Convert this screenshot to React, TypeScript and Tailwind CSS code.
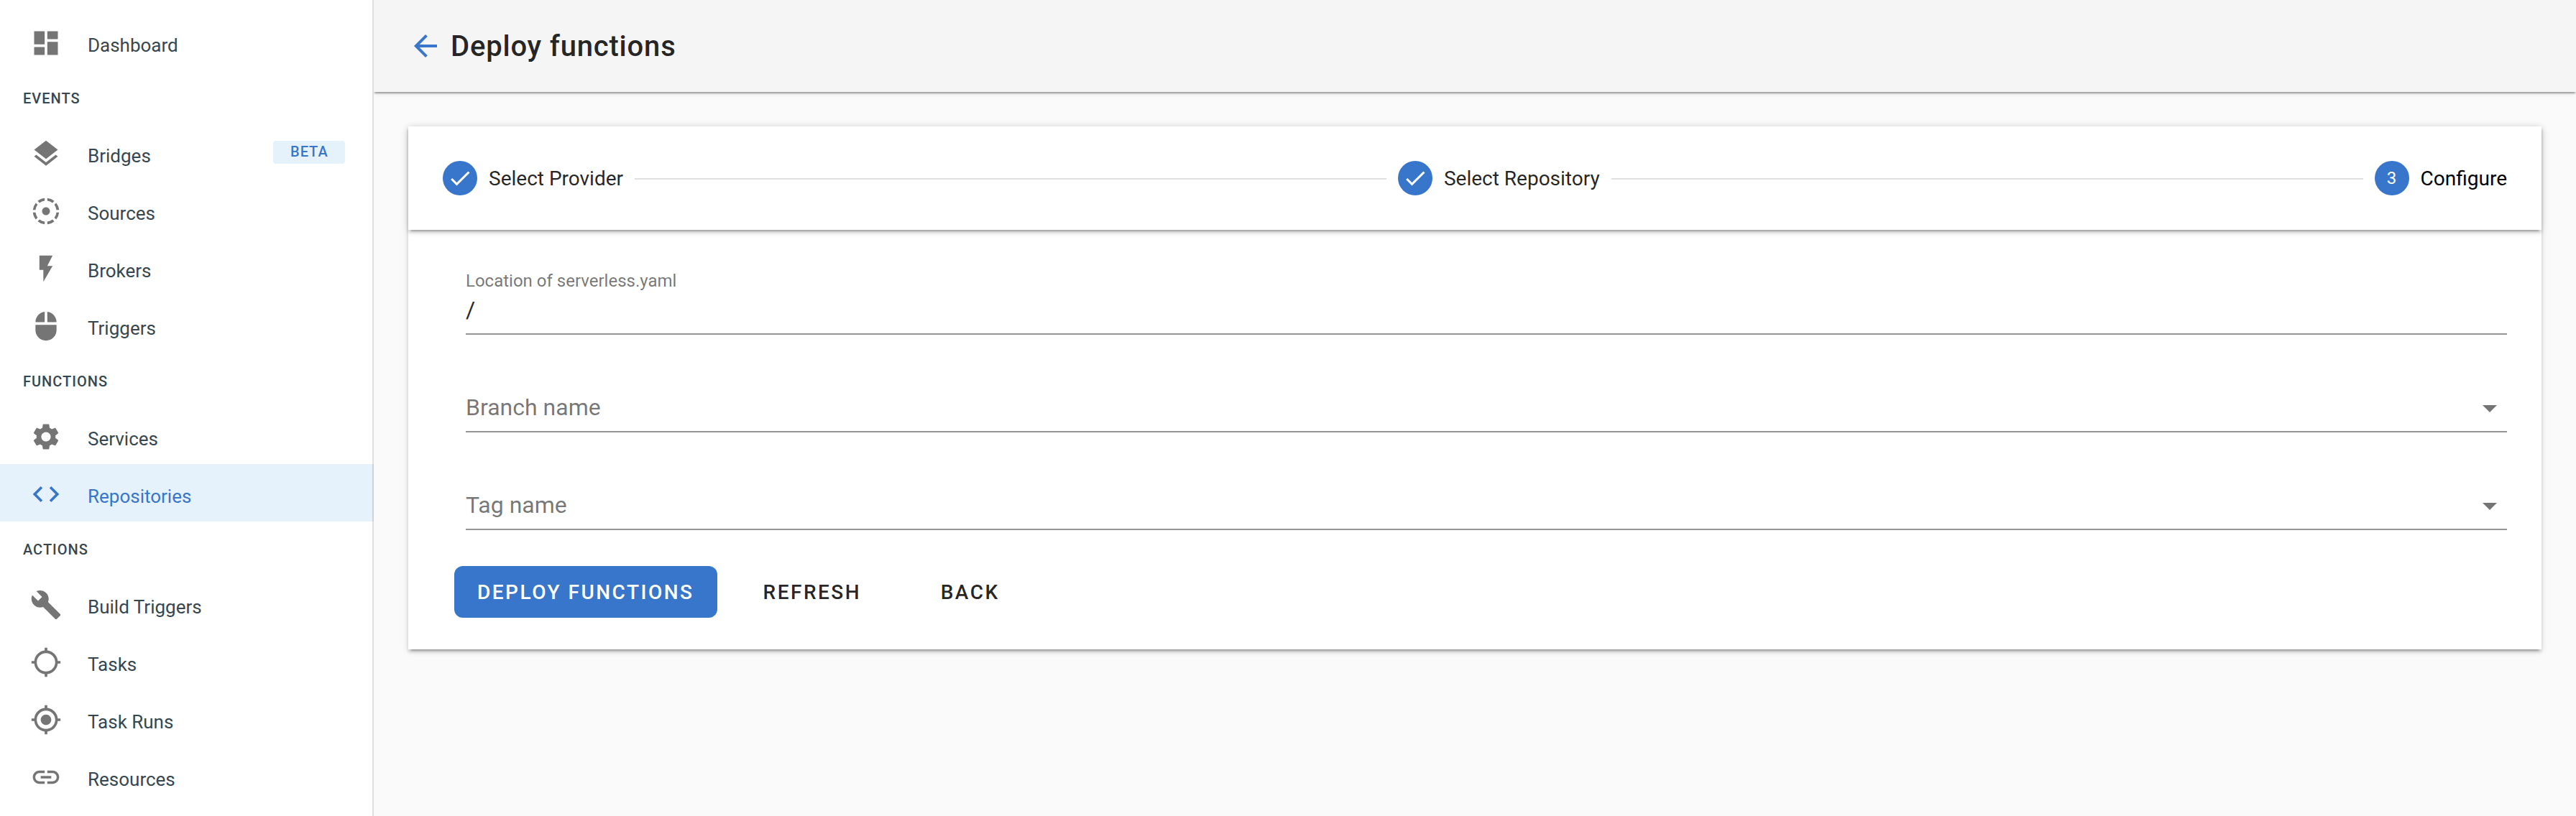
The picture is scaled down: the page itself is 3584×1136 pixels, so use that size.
import React from "react";
import type { IconType } from "react-icons";
import {
  MdArrowBack,
  MdArrowDropDown,
  MdBuild,
  MdCheck,
  MdCode,
  MdDashboard,
  MdFilterTiltShift,
  MdFlashOn,
  MdLayers,
  MdLink,
  MdLocationSearching,
  MdMouse,
  MdMyLocation,
  MdSettings,
} from "react-icons/md";

type Item = { label: string; icon: IconType; badge?: string; active?: boolean };
type Section = { title: string; items: Item[] };

const sections: Section[] = [
  {
    title: "EVENTS",
    items: [
      { label: "Bridges", icon: MdLayers, badge: "BETA" },
      { label: "Sources", icon: MdFilterTiltShift },
      { label: "Brokers", icon: MdFlashOn },
      { label: "Triggers", icon: MdMouse },
    ],
  },
  {
    title: "FUNCTIONS",
    items: [
      { label: "Services", icon: MdSettings },
      { label: "Repositories", icon: MdCode, active: true },
    ],
  },
  {
    title: "ACTIONS",
    items: [
      { label: "Build Triggers", icon: MdBuild },
      { label: "Tasks", icon: MdLocationSearching },
      { label: "Task Runs", icon: MdMyLocation },
      { label: "Resources", icon: MdLink },
    ],
  },
];

function NavItem({ label, icon: Icon, badge, active }: Item) {
  return (
    <a
      className={`flex h-20 items-center pl-[42px] pr-10 ${
        active ? "bg-[#e5f2fc] text-[#3776cb]" : "text-[#37474f]"
      }`}
    >
      <Icon className={`mt-1 size-11 shrink-0 ${active ? "text-[#3776cb]" : "text-[#757575]"}`} />
      <span className="ml-9 mt-2.5 text-[26px] leading-8">{label}</span>
      {badge && (
        <span className="ml-auto flex h-8 w-[100px] items-center rounded bg-[#e5f2fc] pb-0.5 pl-6 text-[20px] font-medium leading-7 tracking-[1px] text-[#3776cb]">
          {badge}
        </span>
      )}
    </a>
  );
}

function Sidebar() {
  return (
    <aside className="relative h-full w-[520px] shrink-0 bg-white pt-[18px] after:absolute after:inset-y-0 after:right-0 after:w-0.5 after:bg-black/12">
      <NavItem label="Dashboard" icon={MdDashboard} />
      {sections.map((s) => (
        <section key={s.title}>
          <h2 className="flex h-[74px] items-center pl-8 pt-1 text-[20px] font-medium leading-6 tracking-[1px] text-[#37474f]">
            {s.title}
          </h2>
          {s.items.map((i) => (
            <NavItem key={i.label} {...i} />
          ))}
        </section>
      ))}
    </aside>
  );
}

function Step({ label, number }: { label: string; number?: number }) {
  return (
    <div className="flex items-center gap-4">
      <span className="flex size-12 items-center justify-center rounded-full bg-[#3776cb] text-[24px] leading-6 text-white">
        {number ?? <MdCheck className="size-9" />}
      </span>
      <span className={`pt-0.5 text-[28px] leading-8 ${number ? "text-black" : "text-black/87"}`}>{label}</span>
    </div>
  );
}

function SelectField({ label }: { label: string }) {
  return (
    <div className="flex h-[136px] items-end">
      <div className="flex h-[70px] w-full items-start justify-between border-b-2 border-[#949494]">
        <span className="pt-[15px] text-[32px] leading-10 text-black/55">{label}</span>
        <MdArrowDropDown className="mt-3 size-12 text-[#757575]" />
      </div>
    </div>
  );
}

const raised =
  "shadow-[0_6px_2px_-4px_rgba(0,0,0,0.2),0_4px_4px_0_rgba(0,0,0,0.14),0_2px_10px_0_rgba(0,0,0,0.12)]";

export default function App() {
  return (
    <div className="flex h-[1136px] w-[3584px] overflow-hidden bg-[#fafafa] font-[Roboto,sans-serif] text-black/87">
      <Sidebar />
      <main className="min-w-0 flex-1 overflow-hidden">
        <header className="flex h-32 items-center gap-[11px] bg-[#f5f5f5] pl-12 shadow-[0_4px_2px_-2px_rgba(0,0,0,0.2),0_2px_2px_0_rgba(0,0,0,0.14),0_2px_6px_0_rgba(0,0,0,0.12)]">
          <MdArrowBack className="size-12 text-[#3776cb]" />
          <h1 className="pt-0.5 text-[40px] font-medium leading-[48px] tracking-[0.8px]">Deploy functions</h1>
        </header>

        <div className={`mx-12 mt-12 h-[728px] bg-white ${raised}`}>
          <div className={`flex h-36 items-center gap-4 px-12 ${raised}`}>
            <Step label="Select Provider" />
            <span className="mt-0.5 h-0.5 flex-1 bg-black/12" />
            <Step label="Select Repository" />
            <span className="mt-0.5 h-0.5 flex-1 bg-black/12" />
            <Step label="Configure" number={3} />
          </div>

          <form className="pl-20 pr-12 pt-[54px]">
            <div className="h-[92px] border-b-2 border-[#949494]">
              <label className="block pt-px text-[24px] leading-8 text-black/55">Location of serverless.yaml</label>
              <div className="pt-1 text-[32px] leading-10">/</div>
            </div>
            <SelectField label="Branch name" />
            <SelectField label="Tag name" />
            <div className="-ml-4 mt-[50px] flex h-[72px] text-[28px] font-medium tracking-[2.5px]">
              <button type="button" className="rounded-xl bg-[#3776cb] px-8 pt-0.5 text-white">
                DEPLOY FUNCTIONS
              </button>
              <button type="button" className="ml-8 px-8 pt-0.5">
                REFRESH
              </button>
              <button type="button" className="ml-[46.5px] px-8 pt-0.5">
                BACK
              </button>
            </div>
          </form>
        </div>
      </main>
    </div>
  );
}
